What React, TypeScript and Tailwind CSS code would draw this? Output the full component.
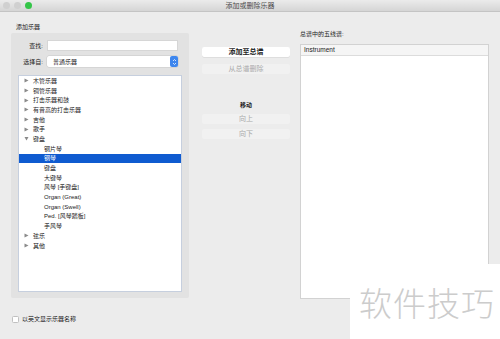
import React from "react";

type Row = { label: string; level: 0 | 1; arrow?: "right" | "down"; selected?: boolean };

const rows: Row[] = [
  { label: "木管乐器", level: 0, arrow: "right" },
  { label: "铜管乐器", level: 0, arrow: "right" },
  { label: "打击乐器和鼓", level: 0, arrow: "right" },
  { label: "有音高的打击乐器", level: 0, arrow: "right" },
  { label: "吉他", level: 0, arrow: "right" },
  { label: "歌手", level: 0, arrow: "right" },
  { label: "键盘", level: 0, arrow: "down" },
  { label: "钢片琴", level: 1 },
  { label: "钢琴", level: 1, selected: true },
  { label: "键盘", level: 1 },
  { label: "大键琴", level: 1 },
  { label: "风琴 [手键盘]", level: 1 },
  { label: "Organ (Great)", level: 1 },
  { label: "Organ (Swell)", level: 1 },
  { label: "Ped. [风琴踏板]", level: 1 },
  { label: "手风琴", level: 1 },
  { label: "弦乐", level: 0, arrow: "right" },
  { label: "其他", level: 0, arrow: "right" },
];

function Arrow({ dir }: { dir: "right" | "down" }) {
  return (
    <svg width="5" height="5" viewBox="0 0 10 10" className="shrink-0">
      {dir === "right" ? (
        <polygon points="1,1 9,5 1,9" fill="#8a8a8a" />
      ) : (
        <polygon points="1,2 9,2 5,9" fill="#8a8a8a" />
      )}
    </svg>
  );
}

function TreeRow({ row }: { row: Row }) {
  return (
    <div
      className={`flex h-[9.7px] items-center ${
        row.selected ? "bg-[#0f5bd0] text-white" : "text-[#222]"
      }`}
    >
      {row.level === 0 ? (
        <>
          <div className="ml-[5px] w-[9px]">{row.arrow && <Arrow dir={row.arrow} />}</div>
          <span>{row.label}</span>
        </>
      ) : (
        <span className="ml-[25px]">{row.label}</span>
      )}
    </div>
  );
}

export default function App() {
  return (
    <div
      className="relative h-[339px] w-[500px] overflow-hidden bg-[#ececec] text-[6px] leading-[8px] text-[#222]"
      style={{ fontFamily: '"Liberation Sans", "Noto Sans CJK SC", sans-serif' }}
    >
      {/* Title bar */}
      <div className="relative flex h-[12px] items-center border-b border-[#c4c4c4] bg-gradient-to-b from-[#ebebeb] to-[#d5d5d5]">
        <div className="ml-[3px] flex gap-[4px]">
          <div className="h-[7px] w-[7px] rounded-full bg-[#d0d0d0]" />
          <div className="h-[7px] w-[7px] rounded-full bg-[#d0d0d0]" />
          <div className="h-[7px] w-[7px] rounded-full bg-[#34c548]" />
        </div>
        <div className="absolute inset-0 flex items-center justify-center text-[7px] text-[#4a4a4a]">
          添加或删除乐器
        </div>
      </div>

      <div className="flex">
        {/* Left column */}
        <div className="ml-[11px] w-[178px]">
          <div className="ml-[5px] mt-[11px]">添加乐器</div>
          <div className="mt-[2px] h-[265px] rounded-[2px] bg-[#e2e2e2] pt-[7px]">
            <div className="flex h-[11px] items-center">
              <div className="w-[35px] pr-[3px] text-right">查找:</div>
              <div className="ml-[1px] h-[11px] w-[131px] border border-[#d6d6d6] bg-white" />
            </div>
            <div className="mt-[5px] flex h-[11px] items-center">
              <div className="w-[35px] pr-[3px] text-right">选择自:</div>
              <div className="ml-[1px] flex h-[11px] w-[131px] items-center justify-between rounded-[2px] bg-white shadow-[0_0_0_0.5px_#c8c8c8]">
                <span className="ml-[6px]">普通乐器</span>
                <div className="flex h-[11px] w-[8px] flex-col items-center justify-center rounded-[2px] bg-[#3d86ee]">
                  <svg width="5" height="8" viewBox="0 0 10 16">
                    <polyline points="2,6 5,3 8,6" fill="none" stroke="white" strokeWidth="1.5" />
                    <polyline points="2,10 5,13 8,10" fill="none" stroke="white" strokeWidth="1.5" />
                  </svg>
                </div>
              </div>
            </div>
            <div className="ml-[7px] mt-[8px] h-[217px] w-[164px] border border-[#c6cfde] bg-white">
              {rows.map((r, i) => (
                <TreeRow key={i} row={r} />
              ))}
            </div>
          </div>
          <div className="mt-[17px] flex items-center">
            <div className="ml-[1px] h-[7px] w-[7px] rounded-[1.5px] border border-[#c0c0c0] bg-white" />
            <span className="ml-[3px]">以英文显示乐器名称</span>
          </div>
        </div>

        {/* Middle column */}
        <div className="ml-[13px] flex w-[88px] flex-col items-stretch text-[7px]">
          <div className="mt-[35px] flex h-[10px] items-center justify-center rounded-[2px] bg-white font-semibold text-[#222] shadow-[0_0.5px_0.5px_#cfcfcf]">
            添加至总谱
          </div>
          <div className="mt-[7px] flex h-[10px] items-center justify-center rounded-[2px] bg-[#f1f1f1] text-[#aaa]">
            从总谱删除
          </div>
          <div className="mt-[27px] text-center text-[6px] font-semibold">移动</div>
          <div className="mt-[5px] flex h-[10px] items-center justify-center rounded-[2px] bg-[#f1f1f1] text-[#aaa]">
            向上
          </div>
          <div className="mt-[5px] flex h-[10px] items-center justify-center rounded-[2px] bg-[#f1f1f1] text-[#aaa]">
            向下
          </div>
        </div>

        {/* Right column */}
        <div className="ml-[10px] w-[189px]">
          <div className="mt-[18px]">总谱中的五线谱:</div>
          <div className="mt-[6px] h-[255px] border border-[#d2d2d2] bg-white">
            <div className="flex h-[11px] items-center border-b border-[#dcdcdc] bg-[#f5f5f5] pl-[3px] text-[6.5px]">
              Instrument
            </div>
          </div>
        </div>
      </div>

      {/* Watermark overlay */}
      <div className="absolute bottom-0 right-0 flex h-[75px] w-[150px] items-center justify-center bg-white pl-[4px] pt-[2px]">
        <span
          className="text-[33px] font-light leading-none tracking-[1px] text-[#cccccc]"
          style={{ fontFamily: '"Noto Sans CJK SC", sans-serif' }}
        >
          软件技巧
        </span>
      </div>
    </div>
  );
}
